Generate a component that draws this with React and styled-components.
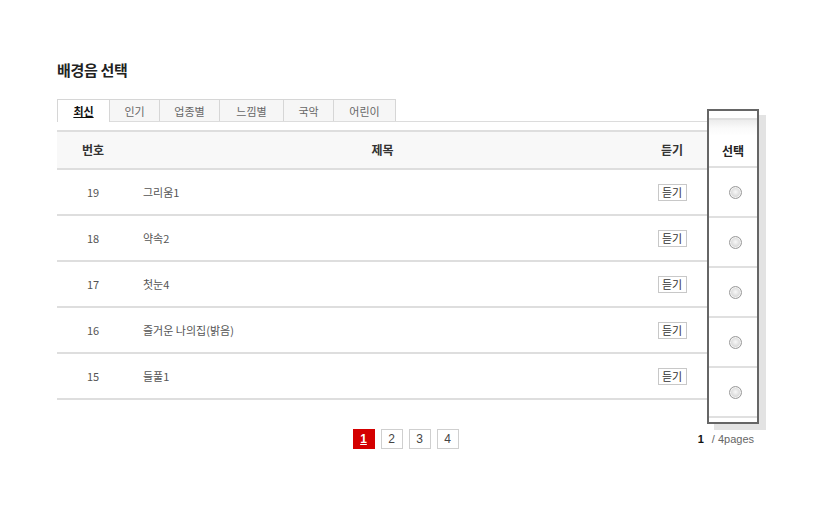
import React from 'react';
import styled, { createGlobalStyle } from 'styled-components';

const GlobalStyle = createGlobalStyle`
  html, body {
    margin: 0;
    padding: 0;
    background: #fff;
  }
  body {
    font-family: "Noto Sans CJK KR", "Liberation Sans", sans-serif;
    color: #444;
  }
`;

const Page = styled.div`
  width: 818px;
  height: 528px;
  box-sizing: border-box;
  padding: 59px 0 0 57px;
`;

const Wrap = styled.div`
  width: 697px;
`;

const Title = styled.h2`
  margin: 0;
  font-size: 15px;
  line-height: 22px;
  font-weight: bold;
  color: #222;
  letter-spacing: -0.3px;
`;

const Body = styled.div`
  display: flex;
  align-items: flex-start;
  margin-top: 18px;
`;

const Main = styled.div`
  width: 651px;
  flex: none;
`;

const Tabs = styled.ul`
  display: flex;
  list-style: none;
  margin: 0;
  padding: 0;
  border-bottom: 1px solid #dcdcdc;
`;

const Tab = styled.li`
  width: ${p => p.w}px;
  box-sizing: border-box;
  border: 1px solid #d6d6d6;
  border-left: ${p => (p.first ? '1px solid #d6d6d6' : 'none')};
  border-bottom: none;
  background: ${p => (p.active ? '#fff' : '#f6f6f6')};
  margin-bottom: ${p => (p.active ? '-1px' : '0')};
  height: ${p => (p.active ? '23px' : '22px')};
  display: flex;
  align-items: center;
  justify-content: center;
  font-size: 11px;
  color: ${p => (p.active ? '#111' : '#666')};
  font-weight: ${p => (p.active ? 'bold' : 'normal')};
  text-decoration: ${p => (p.active ? 'underline' : 'none')};
`;

const Table = styled.div`
  margin-top: 8px;
  border-top: 2px solid #dedede;
`;

const Row = styled.div`
  display: grid;
  grid-template-columns: 72px 1fr 72px;
  align-items: center;
  height: ${p => (p.head ? 36 : 44)}px;
  background: ${p => (p.head ? '#f8f8f8' : '#fff')};
  border-bottom: 2px solid #dedede;
  font-size: ${p => (p.head ? 12 : 11)}px;
  font-weight: ${p => (p.head ? 'bold' : 'normal')};
  color: ${p => (p.head ? '#333' : '#555')};
`;

const Cell = styled.div`
  text-align: ${p => p.align || 'center'};
  padding-left: ${p => p.pl || 0}px;
  line-height: 16px;
`;

const ListenBtn = styled.button`
  width: 29px;
  height: 17px;
  padding: 0;
  border: 1px solid #c8c8c8;
  background: #fff;
  font-family: inherit;
  font-size: 11px;
  line-height: 13px;
  color: #333;
`;

const SelectBox = styled.div`
  flex: none;
  width: 52px;
  margin-top: 10px;
  margin-left: -1px;
  box-sizing: border-box;
  border: 2px solid #666;
  background: #fff;
  box-shadow: 7px 6px 0 #e3e3e3;
  padding: 7px 0 4px;
`;

const SelectHead = styled.div`
  border-top: 2px solid #e0e0e0;
  border-bottom: 2px solid #e0e0e0;
  background: linear-gradient(#ececec, #fafafa 8px, #fff 16px);
  display: flex;
  align-items: center;
  justify-content: center;
  padding-top: 14px;
  box-sizing: content-box;
  height: 32px;
  font-size: 12px;
  font-weight: bold;
  color: #222;
`;

const SelectCell = styled.div`
  height: 48px;
  border-bottom: 2px solid #e0e0e0;
  display: flex;
  align-items: center;
  justify-content: center;
`;

const Radio = styled.input`
  appearance: none;
  width: 13px;
  height: 13px;
  margin: 0 0 0 5px;
  border-radius: 50%;
  border: 1px solid #9a9a9a;
  background: radial-gradient(circle at 50% 45%, #f8f8f8 0, #e0e0e0 45%, #c4c4c4 100%);
  box-shadow: inset 0 0 0 1px #f4f4f4;
`;

const Footer = styled.div`
  display: grid;
  grid-template-columns: 1fr auto 1fr;
  align-items: center;
  margin-top: 5px;
`;

const Pager = styled.div`
  grid-column: 2;
  display: flex;
  gap: 6px;
`;

const PageBtn = styled.a`
  width: 22px;
  height: 20px;
  box-sizing: border-box;
  display: flex;
  align-items: center;
  justify-content: center;
  border: 1px solid ${p => (p.active ? '#d40000' : '#cfcfcf')};
  background: ${p => (p.active ? '#d40000' : '#fff')};
  color: ${p => (p.active ? '#fff' : '#444')};
  font-family: "Liberation Sans", sans-serif;
  font-size: 12px;
  font-weight: ${p => (p.active ? 'bold' : 'normal')};
  text-decoration: ${p => (p.active ? 'underline' : 'none')};
`;

const PageInfo = styled.div`
  grid-column: 3;
  justify-self: end;
  font-family: "Liberation Sans", sans-serif;
  font-size: 11px;
  color: #666;
  b {
    color: #111;
    margin-right: 8px;
  }
`;

const tabs = [
  { label: '최신', w: 53, active: true },
  { label: '인기', w: 50 },
  { label: '업종별', w: 60 },
  { label: '느낌별', w: 64 },
  { label: '국악', w: 50 },
  { label: '어린이', w: 62 },
];

const songs = [
  { no: 19, title: '그리움1' },
  { no: 18, title: '약속2' },
  { no: 17, title: '첫눈4' },
  { no: 16, title: '즐거운 나의집(밝음)' },
  { no: 15, title: '들풀1' },
];

export default function App() {
  return (
    <Page>
      <GlobalStyle />
      <Wrap>
        <Title>배경음 선택</Title>
        <Body>
          <Main>
            <Tabs>
              {tabs.map((t, i) => (
                <Tab key={t.label} w={t.w} active={t.active} first={i === 0}>
                  {t.label}
                </Tab>
              ))}
            </Tabs>
            <Table>
              <Row head>
                <Cell>번호</Cell>
                <Cell>제목</Cell>
                <Cell>듣기</Cell>
              </Row>
              {songs.map(s => (
                <Row key={s.no}>
                  <Cell>{s.no}</Cell>
                  <Cell align="left" pl={14}>{s.title}</Cell>
                  <Cell>
                    <ListenBtn>듣기</ListenBtn>
                  </Cell>
                </Row>
              ))}
            </Table>
          </Main>
          <SelectBox>
            <SelectHead>선택</SelectHead>
            {songs.map(s => (
              <SelectCell key={s.no}>
                <Radio type="radio" name="bgm" />
              </SelectCell>
            ))}
          </SelectBox>
        </Body>
        <Footer>
          <Pager>
            <PageBtn active>1</PageBtn>
            <PageBtn>2</PageBtn>
            <PageBtn>3</PageBtn>
            <PageBtn>4</PageBtn>
          </Pager>
          <PageInfo>
            <b>1</b>/ 4pages
          </PageInfo>
        </Footer>
      </Wrap>
    </Page>
  );
}
